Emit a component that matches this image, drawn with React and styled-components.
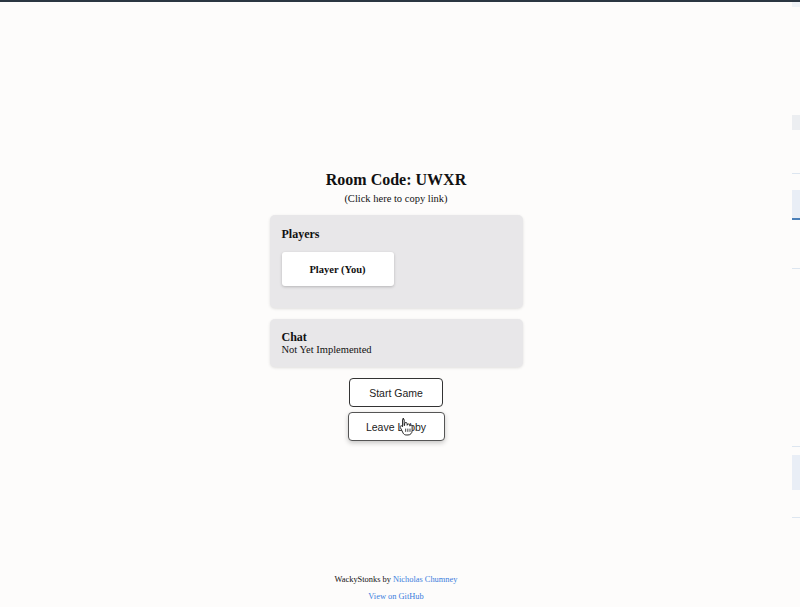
import React from "react";
import styled, { createGlobalStyle } from "styled-components";

const GlobalStyle = createGlobalStyle`
  html, body {
    margin: 0;
    padding: 0;
    background: #fdfcfb;
    font-family: "Liberation Serif", "Times New Roman", serif;
  }
`;

const Screen = styled.div`
  height: 607px;
  box-sizing: border-box;
  border-top: 2px solid #2b3641;
  display: flex;
`;

const Page = styled.div`
  flex: 1;
  display: flex;
  flex-direction: column;
  align-items: center;
`;

const SidePane = styled.aside`
  width: 8px;
  display: flex;
  flex-direction: column;
`;

const SideBlock = styled.div`
  margin-top: ${({ $top }) => $top}px;
  height: ${({ $h }) => $h}px;
  background: ${({ $bg }) => $bg};
  border-bottom: ${({ $line }) => ($line ? `2px solid ${$line}` : "none")};
`;

const Lobby = styled.main`
  flex: 1;
  width: 253px;
  padding-top: 169px;
  display: flex;
  flex-direction: column;
  align-items: center;
`;

const Title = styled.h1`
  margin: 0;
  font-size: 16px;
  line-height: 18px;
  font-weight: bold;
  color: #111;
`;

const CopyLink = styled.div`
  margin-top: 4px;
  font-size: 10.5px;
  line-height: 12px;
  color: #111;
  cursor: pointer;
`;

const Panel = styled.section`
  align-self: stretch;
  box-sizing: border-box;
  background: #e8e7e9;
  border-radius: 5px;
  box-shadow: 0 1px 3px rgba(0, 0, 0, 0.12);
  padding: ${({ $pad }) => $pad};
  margin-top: ${({ $gap }) => $gap};
`;

const PanelTitle = styled.h2`
  margin: 0;
  font-size: 12px;
  line-height: 14px;
  font-weight: bold;
  color: #111;
`;

const PanelText = styled.div`
  font-size: 10.5px;
  line-height: 12px;
  color: #111;
`;

const PlayerList = styled.div`
  display: flex;
  flex-wrap: wrap;
  gap: 8px;
  margin-top: 11px;
`;

const PlayerCard = styled.div`
  width: 112px;
  height: 34px;
  display: flex;
  align-items: center;
  justify-content: center;
  background: #fff;
  border-radius: 3px;
  box-shadow: 0 1px 3px rgba(0, 0, 0, 0.22);
  font-size: 10.5px;
  font-weight: bold;
  color: #111;
`;

const Actions = styled.div`
  margin-top: 11px;
  display: flex;
  flex-direction: column;
  align-items: center;
  gap: 5px;
`;

const Button = styled.button`
  position: relative;
  box-sizing: border-box;
  width: ${({ $hover }) => ($hover ? "97px" : "94px")};
  height: 29px;
  padding: 0;
  background: #fff;
  border: 1px solid ${({ $hover }) => ($hover ? "#555" : "#333")};
  border-radius: 4px;
  font-family: "Liberation Sans", Arial, sans-serif;
  font-size: 10.5px;
  color: #222;
  cursor: pointer;
  box-shadow: ${({ $hover }) => ($hover ? "0 2px 5px rgba(0,0,0,0.22)" : "none")};
`;

const Cursor = styled.svg`
  position: absolute;
  left: 50px;
  top: 4px;
  width: 14px;
  height: 20px;
`;

const Footer = styled.footer`
  padding-bottom: 4px;
  display: flex;
  flex-direction: column;
  align-items: center;
  gap: 5px;
  font-size: 8.4px;
  line-height: 12px;
  color: #111;
`;

const Link = styled.a`
  color: #3b7ddd;
  text-decoration: none;
`;

const HandCursor = () => (
  <Cursor viewBox="0 0 13 18">
    <path
      d="M3.5 1.2c.8 0 1.3.6 1.3 1.3v5.2l.4-.1V6c0-.7.5-1.2 1.2-1.2s1.2.5 1.2 1.2v1.4c0-.7.5-1.2 1.2-1.2s1.2.5 1.2 1.2v.8c0-.6.5-1.1 1.1-1.1s1.1.5 1.1 1.1v4.2c0 2.3-1.6 4-3.8 4H6.6c-1.2 0-2.1-.6-2.7-1.6L1.3 9.6c-.4-.6-.2-1.3.3-1.6.6-.3 1.2-.1 1.5.4l.2.4V2.5c0-.7.5-1.3 1.2-1.3z"
      fill="#fff"
      stroke="#222"
      strokeWidth="0.9"
    />
    <path d="M6.2 10.5v3M8.2 10.5v3M10.2 10.5v3" stroke="#222" strokeWidth="0.8" />
  </Cursor>
);

export default function App() {
  return (
    <>
      <GlobalStyle />
      <Screen>
        <Page>
          <Lobby>
            <Title>Room Code: UWXR</Title>
            <CopyLink>(Click here to copy link)</CopyLink>
            <Panel $pad="12px 12px 22px" $gap="10px">
              <PanelTitle>Players</PanelTitle>
              <PlayerList>
                <PlayerCard>Player (You)</PlayerCard>
              </PlayerList>
            </Panel>
            <Panel $pad="11px 12px 11px" $gap="11px">
              <PanelTitle>Chat</PanelTitle>
              <PanelText>Not Yet Implemented</PanelText>
            </Panel>
            <Actions>
              <Button>Start Game</Button>
              <Button $hover>
                Leave Lobby
                <HandCursor />
              </Button>
            </Actions>
          </Lobby>
          <Footer>
            <div>
              WackyStonks by <Link href="#">Nicholas Chumney</Link>
            </div>
            <Link href="#">View on GitHub</Link>
          </Footer>
        </Page>
        <SidePane>
          <SideBlock $top={0} $h={5} $bg="#f0f3f7" />
          <SideBlock $top={108} $h={15} $bg="#eceef1" />
          <SideBlock $top={43} $h={1} $bg="#dde6f0" />
          <SideBlock $top={16} $h={28} $bg="#e9eef6" $line="#4a7fb8" />
          <SideBlock $top={48} $h={1} $bg="#dde6f0" />
          <SideBlock $top={177} $h={1} $bg="#dde6f0" />
          <SideBlock $top={8} $h={35} $bg="#e9eef6" />
          <SideBlock $top={27} $h={1} $bg="#dde6f0" />
        </SidePane>
      </Screen>
    </>
  );
}
